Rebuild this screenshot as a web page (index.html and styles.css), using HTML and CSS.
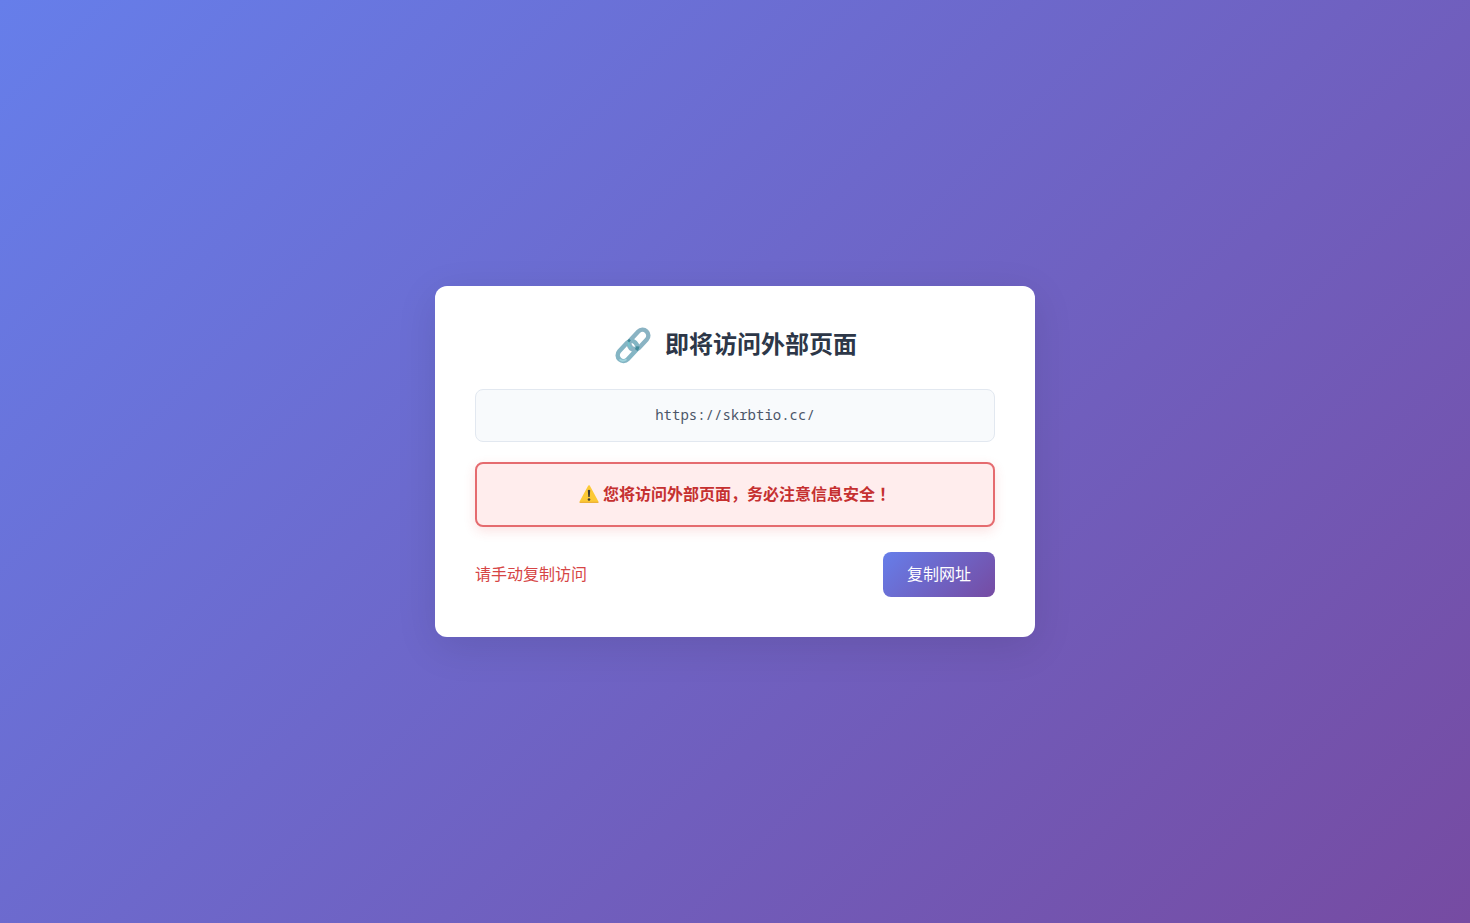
FILE: index.html
```html
<!DOCTYPE html>
<html lang="zh-CN">
<head>
<meta charset="UTF-8">
<meta name="viewport" content="width=device-width, initial-scale=1">
<title>即将访问外部页面</title>
<link rel="stylesheet" href="styles.css">
</head>
<body>
<main class="card">
  <header class="card-header">
    <svg class="link-icon" viewBox="0 0 40 38" aria-hidden="true">
      <g fill="none" stroke-width="4.4">
        <rect x="-11.6" y="-5.8" width="23.2" height="11.6" rx="5.8" transform="translate(25.6 13.8) rotate(-47)" stroke="#8ab3c3"/>
        <rect x="-11.6" y="-5.8" width="23.2" height="11.6" rx="5.8" transform="translate(14.4 25) rotate(-47)" stroke="#84b5c4"/>
        <path d="M17.2 14.6c-1.4 2.6-.6 5 1.2 6.8 1.4 1.3 3 1.8 4.6 1.6" stroke="#8ab3c3" stroke-width="4"/>
        <path d="M15.7 15.4c-.7 2.6.2 4.9 2.2 6.6" stroke="#74c6cf" stroke-width="1.6"/>
        <path d="M23.2 24c1-1.2 1.6-2.4 1.7-3.6" stroke="#438c9b" stroke-width="3.4"/>
        <path d="M15.2 15.6l1.8-2" stroke="#438c9b" stroke-width="2.4"/>
        <path d="M6.5 33.4c2 1.6 5 1.4 7-.1" stroke="#a0d4dd" stroke-width="1.8"/>
      </g>
    </svg>
    <h1 class="title">即将访问外部页面</h1>
  </header>
  <div class="url-box">https://skrbtio.cc/</div>
  <div class="warning" role="alert">
    <svg class="warning-icon" viewBox="0 1 20 20" aria-hidden="true">
      <path d="M10 2.2 18.4 17.8H1.6Z" fill="#fcc936" stroke="#fcc936" stroke-width="2" stroke-linejoin="round"/>
      <path d="M1 18.3h18" stroke="#e9aa2c" stroke-width="1" stroke-linecap="round"/>
      <path d="M8.8 6.2Q10 5.3 11.2 6.2L10.7 13H9.3Z" fill="#3c3b35"/>
      <circle cx="10" cy="15.5" r="1.3" fill="#3c3b35"/>
    </svg>
    <span>您将访问外部页面，务必注意信息安全<span class="mark" lang="zh-TW">！</span></span>
  </div>
  <div class="actions">
    <span class="hint">请手动复制访问</span>
    <button class="copy-button" type="button">复制网址</button>
  </div>
</main>
</body>
</html>
```
FILE: styles.css
```css
* {
  box-sizing: border-box;
  margin: 0;
  padding: 0;
}

body {
  display: flex;
  align-items: center;
  justify-content: center;
  min-height: 100vh;
  padding: 20px;
  background: linear-gradient(135deg, #667eea 0%, #764ba2 100%);
  font-family: "Liberation Sans", "Noto Sans CJK SC", sans-serif;
  font-size: 16px;
  line-height: 21px;
}

.card {
  width: 100%;
  max-width: 600px;
  padding: 40px;
  border-radius: 12px;
  background: #fff;
  box-shadow: 0 10px 40px rgba(0, 0, 0, 0.1);
}

.card-header {
  display: flex;
  align-items: center;
  justify-content: center;
  gap: 12px;
  margin-bottom: 25px;
}

.link-icon {
  width: 40px;
  height: 38px;
}

.title {
  color: #2d3748;
  font-size: 24px;
  font-weight: 600;
  line-height: 32px;
}

.url-box {
  margin-bottom: 20px;
  padding: 14px 15px 16px;
  border: 1px solid #e2e8f0;
  border-radius: 8px;
  background: #f8fafc;
  color: #4a5568;
  font-family: "Noto Sans Mono", "DejaVu Sans Mono", monospace;
  font-size: 14px;
  text-align: center;
  word-break: break-all;
}

.warning {
  display: flex;
  align-items: center;
  justify-content: center;
  gap: 4px;
  margin-bottom: 25px;
  padding: 20px;
  border: 2px solid #e56b6f;
  border-radius: 8px;
  background: #ffeded;
  box-shadow: 0 4px 12px rgba(229, 62, 62, 0.15);
  color: #c53030;
  font-weight: 600;
  text-spacing-trim: space-all;
}

.warning-icon {
  width: 20px;
  height: 20px;
}

.mark {
  font-family: "Liberation Sans", "Noto Sans CJK TC", sans-serif;
}

.actions {
  display: flex;
  align-items: center;
  justify-content: space-between;
  gap: 16px;
}

.hint {
  color: #d64545;
}

.copy-button {
  padding: 12px 24px;
  border: 0;
  border-radius: 8px;
  background: linear-gradient(135deg, #667eea 0%, #764ba2 100%);
  color: #fff;
  font: inherit;
  cursor: pointer;
}
```
